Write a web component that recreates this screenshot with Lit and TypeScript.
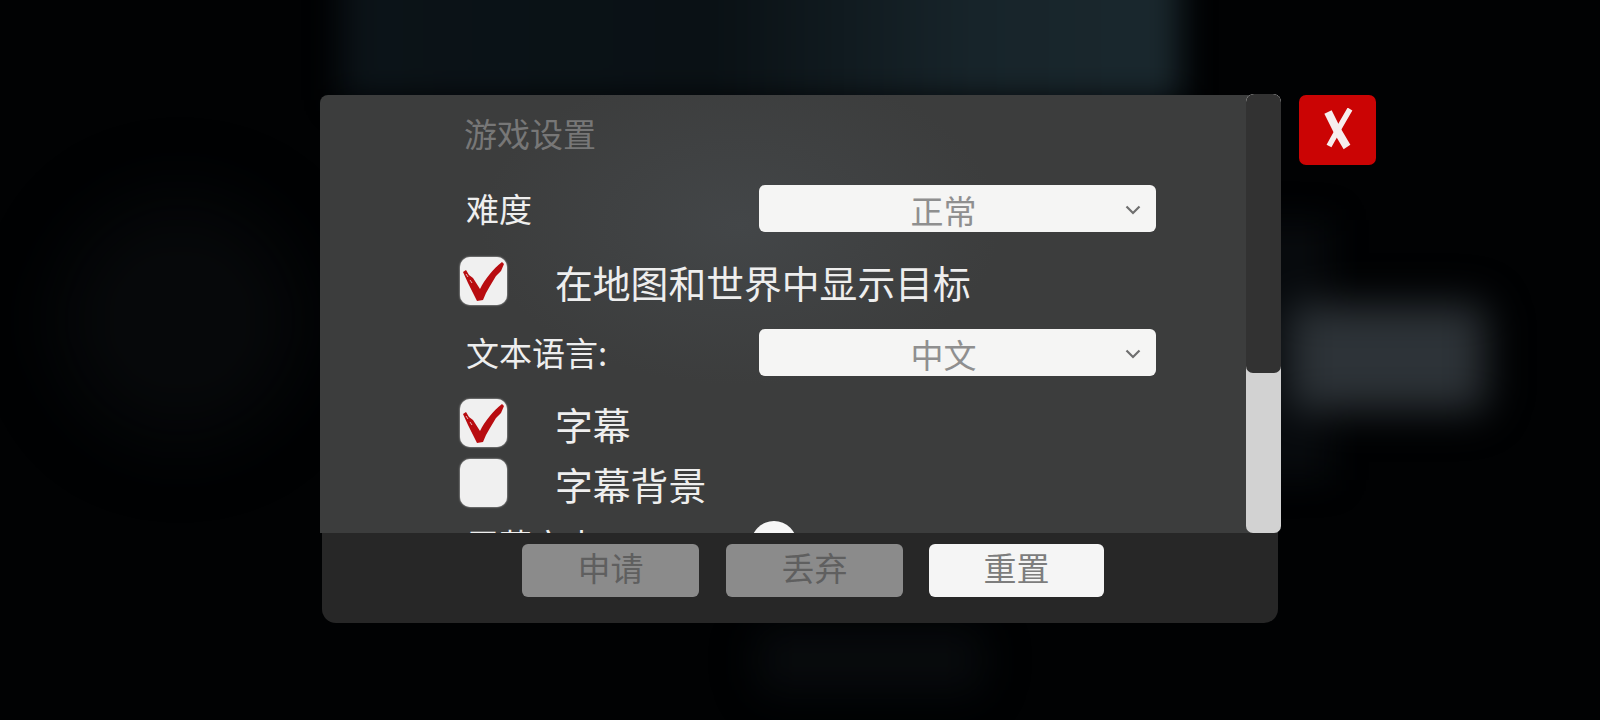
import { LitElement, html, css, svg } from "lit";
import { customElement } from "lit/decorators.js";

const tick = svg`<path d="M3 15 L6 13 L9 18 L13 21 L20 32 C25 22 33 12 42 5 L44 7 L41 14 L36 19 L30 29 L26 36 L23 43 L17 44 L13 36 L8 26 Z" fill="#b80c10"/>
<path d="M6 17 L8 20 M10 23 L12 26" stroke="#e9b9ba" stroke-width="1" fill="none"/>`;

@customElement("app-root")
export class AppRoot extends LitElement {
  static styles = css`
    :host {
      display: block;
      position: relative;
      width: 1600px;
      height: 720px;
      overflow: hidden;
      background: #010203;
      font-family: "Noto Sans CJK SC", "Liberation Sans", sans-serif;
    }
    .backdrop {
      position: absolute;
      inset: -40px;
      filter: blur(16px);
    }
    .glow { position: absolute; }
    .g1 {
      left: 380px;
      top: 0;
      width: 840px;
      height: 140px;
      background: linear-gradient(90deg, #0b1318 0%, #0a1115 45%, #17242a 75%, #1a282e 100%);
    }
    .g2 { left: 1330px; top: 345px; width: 195px; height: 105px; background: #2d3338; filter: blur(12px); }
    .g3 { left: 1290px; top: 260px; width: 80px; height: 260px; background: #070a0d; }
    .g4 { left: 800px; top: 670px; width: 220px; height: 60px; background: #080b0e; filter: blur(12px); }
    .g5 { left: 100px; top: 240px; width: 240px; height: 240px; background: #06080a; border-radius: 50%; filter: blur(30px); }
    .stage {
      position: relative;
      display: flex;
      align-items: flex-start;
      padding: 95px 0 0 320px;
    }
    .window {
      width: 958px;
      display: flex;
      flex-direction: column;
    }
    .upper {
      height: 438px;
      display: flex;
      border-radius: 8px 0 0 0;
      background:
        radial-gradient(260px 160px at 420px 130px, #434648 0%, rgba(67, 70, 72, 0) 100%),
        #3c3d3d;
    }
    .scroll {
      flex: 1;
      height: 100%;
      overflow: hidden;
      display: flex;
      flex-direction: column;
      padding-left: 140px;
      color: #eee;
    }
    .heading {
      font-size: 33px;
      line-height: 40px;
      color: #777;
      margin: 18px 0 0 4px;
    }
    .row { display: flex; align-items: center; flex: none; }
    .label {
      width: 299px;
      padding-left: 6px;
      box-sizing: border-box;
      font-size: 33px;
      line-height: 48px;
    }
    .select {
      width: 397px;
      height: 47px;
      border-radius: 6px;
      background: #f5f5f4;
      display: flex;
      align-items: center;
      position: relative;
      justify-content: center;
      font-size: 33px;
      color: #8f8f8f;
    }
    .select span { margin: 4px 0 0 -28px; line-height: 47px; }
    .select svg { position: absolute; right: 15px; top: 20px; }
    .check {
      width: 47px;
      height: 48px;
      flex: none;
      position: relative;
      border-radius: 10px;
      background: #f0f0f0;
      box-shadow: 0 0 2px #dcdcdc;
    }
    .check svg { position: absolute; left: 0; top: 0; }
    .ctext {
      margin-left: 48px;
      font-size: 37.8px;
      line-height: 47px;
      white-space: nowrap;
    }
    .r1 { margin-top: 31px; }
    .r2 { margin-top: 25px; }
    .r3 { margin-top: 23px; }
    .r4 { margin-top: 23px; }
    .r5 { margin-top: 12px; }
    .r6 { margin-top: 13px; align-items: flex-start; }
    .knob {
      width: 46px;
      height: 46px;
      flex: none;
      border-radius: 50%;
      background: #f6f6f6;
      margin: 1px 0 0 -8px;
    }
    .bar {
      width: 35px;
      height: 439px;
      margin: -1px -3px 0 0;
      flex: none;
      border-radius: 8px 8px 7px 7px;
      background: #d2d2d2;
      overflow: hidden;
      display: flex;
      flex-direction: column;
    }
    .thumb {
      height: 279px;
      background: #323232;
      border-radius: 8px 8px 7px 7px;
    }
    .footer {
      height: 90px;
      margin-left: 2px;
      background: #272727;
      border-radius: 0 0 14px 14px;
      display: flex;
      padding: 11px 0 0 200px;
      gap: 27px;
      box-sizing: border-box;
    }
    .btn {
      width: 177px;
      height: 53px;
      padding-bottom: 7px;
      box-sizing: border-box;
      border-radius: 6px;
      background: #8b8b8b;
      color: #5f5f5f;
      display: flex;
      align-items: center;
      justify-content: center;
      font-size: 33px;
      line-height: 46px;
    }
    .btn.on { background: #f5f5f5; color: #7d7d7d; margin-left: -1px; width: 175px; }
    .close {
      width: 77px;
      height: 70px;
      margin: 0 0 0 21px;
      border-radius: 7px;
      background: #cb0404;
      display: flex;
      align-items: center;
      justify-content: center;
    }
    .close svg { margin-top: -3px; filter: blur(0.6px); }
  `;

  private check(on: boolean) {
    return html`<div class="check">
      ${on
        ? html`<svg width="47" height="48" viewBox="0 0 47 48">${tick}</svg>`
        : ""}
    </div>`;
  }

  private chevron() {
    return html`<svg width="16" height="10" viewBox="0 0 16 10">
      <path d="M1.5 1.5 L8 8 L14.5 1.5" fill="none" stroke="#6f6f6f" stroke-width="2.2" />
    </svg>`;
  }

  render() {
    return html`
      <div class="backdrop">
        <div class="glow g5"></div>
        <div class="glow g1"></div>
        <div class="glow g3"></div>
        <div class="glow g2"></div>
        <div class="glow g4"></div>
      </div>
      <div class="stage">
        <div class="window">
          <div class="upper">
            <div class="scroll">
              <div class="heading">游戏设置</div>
              <div class="row r1">
                <div class="label">难度</div>
                <div class="select"><span>正常</span>${this.chevron()}</div>
              </div>
              <div class="row r2">
                ${this.check(true)}
                <div class="ctext">在地图和世界中显示目标</div>
              </div>
              <div class="row r3">
                <div class="label">文本语言:</div>
                <div class="select"><span>中文</span>${this.chevron()}</div>
              </div>
              <div class="row r4">
                ${this.check(true)}
                <div class="ctext">字幕</div>
              </div>
              <div class="row r5">
                ${this.check(false)}
                <div class="ctext">字幕背景</div>
              </div>
              <div class="row r6">
                <div class="label">屏幕文本</div>
                <div class="knob"></div>
              </div>
            </div>
            <div class="bar"><div class="thumb"></div></div>
          </div>
          <div class="footer">
            <div class="btn">申请</div>
            <div class="btn">丢弃</div>
            <div class="btn on">重置</div>
          </div>
        </div>
        <div class="close">
          <svg width="30" height="42" viewBox="0 0 30 42">
            <path d="M5 4 C10 15 17 28 24 39" fill="none" stroke="#f6eeee" stroke-width="8" />
            <path d="M27 1 C20 13 13 25 6 38" fill="none" stroke="#f6eeee" stroke-width="5.5" />
          </svg>
        </div>
      </div>
    `;
  }
}
